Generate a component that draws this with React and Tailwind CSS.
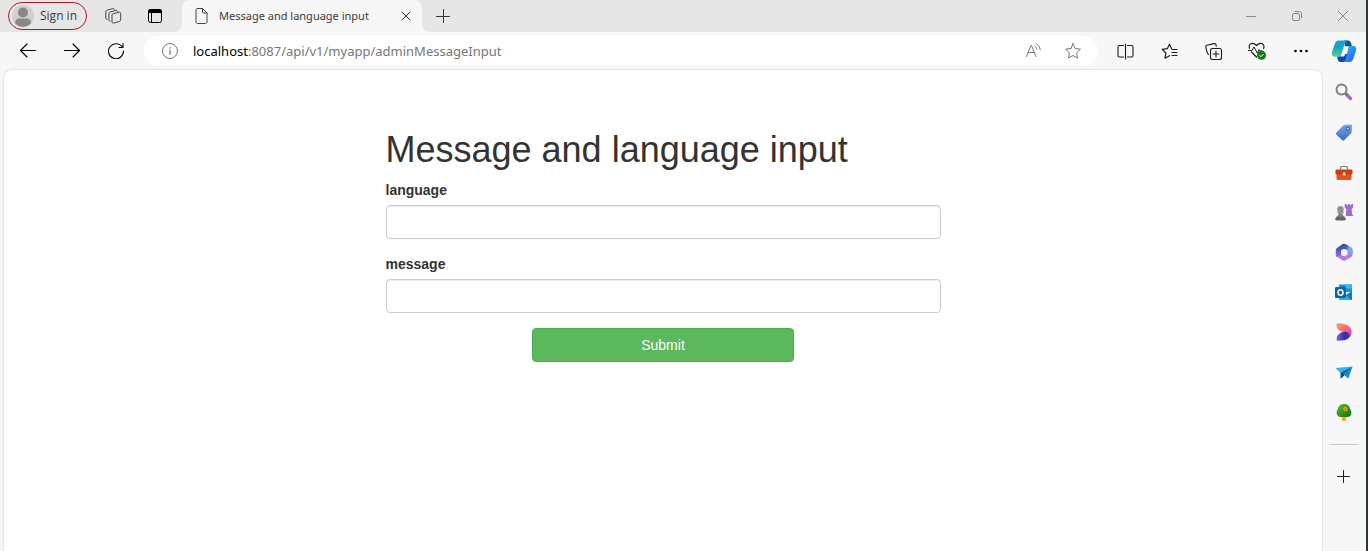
import React from "react";

function Icon({ size = 16, className = "", children }) {
  return (
    <svg
      width={size}
      height={size}
      viewBox={`0 0 ${size} ${size}`}
      fill="none"
      stroke="currentColor"
      strokeLinecap="round"
      strokeLinejoin="round"
      aria-hidden="true"
      className={`shrink-0 ${className}`}
    >
      {children}
    </svg>
  );
}

function IconButton({ label, className = "", children }) {
  return (
    <button type="button" aria-label={label} className={`flex shrink-0 items-center justify-center ${className}`}>
      {children}
    </button>
  );
}

function TitleBar() {
  return (
    <header className="flex h-8 bg-[#f7f7f7] text-[#3b3b3b]">
      <div className="flex w-[182px] shrink-0 items-center rounded-br-lg bg-[#e6e6e6] pl-2">
        <button type="button" className="flex h-7 w-[79px] items-center gap-1.5 rounded-full border border-[#b01c24] pl-[3px] text-xs">
          <svg width="22" height="22" viewBox="0 0 22 22" aria-hidden="true">
            <clipPath id="avatar"><circle cx="11" cy="11" r="11" /></clipPath>
            <circle cx="11" cy="11" r="11" fill="#d2d0ce" />
            <g clipPath="url(#avatar)" fill="#8a8886">
              <circle cx="11" cy="7.500" r="5" />
              <path d="M3 18c0-3 2-4.500 4-4.500h8c2 0 4 1.500 4 4.500-2 3-5 4-8 4s-6-1-8-4z" />
            </g>
          </svg>
          Sign in
        </button>
        <IconButton label="Workspaces" className="ml-1.5 w-10 text-[#444]">
          <Icon size={18}>
            <path d="M8 8.300c0-.8.400-1.300 1.100-1.500l5.900-1.600c1-.2 1.700.3 1.700 1.300v6.300c0 .8-.4 1.400-1.200 1.600l-5.800 1.700c-1 .2-1.700-.3-1.700-1.300z" />
            <path d="M6.300 14.200c-.9-.2-1.400-.7-1.400-1.500V6.500c0-.8.400-1.300 1.100-1.500l5.900-1.600c.8-.2 1.400.1 1.600.8" />
            <path d="M3.200 12.500c-.9-.2-1.400-.7-1.400-1.500V4.700c0-.8.400-1.300 1.100-1.500l5.900-1.600c.8-.2 1.400.1 1.600.8" />
          </Icon>
        </IconButton>
        <IconButton label="Tab actions" className="ml-0.5 w-10 text-black">
          <Icon size={16}>
            <rect x="1.500" y="1.500" width="13" height="13" rx="2" />
            <path d="M1 3.500C1 2 2 1 3.500 1h9C14 1 15 2 15 3.500V5H1z" fill="currentColor" stroke="none" />
            <path d="M4.500 5v9" />
          </Icon>
        </IconButton>
      </div>
      <div className="flex w-60 shrink-0 bg-[#e6e6e6]">
        <div className="flex flex-1 items-center rounded-t-lg bg-[#f7f7f7] pr-2 pl-3">
          <Icon size={16} className="text-[#444]">
            <path d="M3.500.5h5l4.500 4.500v9c0 .8-.7 1.500-1.500 1.500h-8C2.700 15.500 2 14.800 2 14V2C2 1.200 2.700.5 3.500.5zM8.500.5V4c0 .6.400 1 1 1H13" />
          </Icon>
          <span className="ml-[9px] flex-1 font-['Noto_Sans',sans-serif] text-[11px] whitespace-nowrap">Message and language input</span>
          <IconButton label="Close tab" className="w-4 text-[#333]">
            <Icon size={10}><path d="M1 1l8 8M9 1L1 9" /></Icon>
          </IconButton>
        </div>
      </div>
      <div className="flex flex-1 justify-between rounded-bl-lg bg-[#e6e6e6]">
        <IconButton label="New tab" className="w-[42px] text-[#333]">
          <Icon size={14}><path d="M7.500 .5v13M.5 7.500h13" /></Icon>
        </IconButton>
        <div className="flex text-[#888]">
          <IconButton label="Minimize" className="w-[46px]">
            <Icon size={10}><path d="M.5 5.500h9" /></Icon>
          </IconButton>
          <IconButton label="Restore" className="w-[46px]">
            <Icon size={10}>
              <rect x=".5" y="2.500" width="7" height="7" rx="1.500" />
              <path d="M3 .5h4.500c1 0 2 1 2 2V7" />
            </Icon>
          </IconButton>
          <IconButton label="Close" className="w-[46px]">
            <Icon size={10}><path d="M.5 .5l9 9M9.500 .5l-9 9" /></Icon>
          </IconButton>
        </div>
      </div>
    </header>
  );
}

function Toolbar() {
  return (
    <div className="flex h-[38px] items-center pl-1.5 text-[#1b1b1b]">
      <IconButton label="Back" className="w-11">
        <Icon size={16} className="text-black"><path d="M.5 7.500h15M7 1L.5 7.500 7 14" strokeWidth="1.100" /></Icon>
      </IconButton>
      <IconButton label="Forward" className="w-11">
        <Icon size={16} className="text-black"><path d="M.5 7.500h15M9 1l6.500 6.500L9 14" strokeWidth="1.100" /></Icon>
      </IconButton>
      <IconButton label="Refresh" className="w-11">
        <Icon size={16} className="text-black"><path d="M14.500 4.500A7.500 7.500 0 1 0 15.500 8M15 .5v4h-4" strokeWidth="1.100" /></Icon>
      </IconButton>
      <div className="ml-1.5 flex h-[30px] min-w-0 flex-1 items-center rounded-full bg-white pr-[5px] pl-[18px] text-[#777]">
        <Icon size={16}>
          <circle cx="8" cy="8" r="7.500" />
          <path d="M8 7.200v4.300M8 4.500v.6" strokeWidth="1.200" />
        </Icon>
        <div className="relative ml-[15px] min-w-0 flex-1 font-['Noto_Sans',sans-serif] text-[13px] leading-5">
          <div aria-hidden="true" className="truncate">
            <span className="text-black">localhost</span>:8087/api/v1/myapp/adminMessageInput
          </div>
          <input
            aria-label="Address"
            defaultValue="localhost:8087/api/v1/myapp/adminMessageInput"
            className="absolute inset-0 w-full bg-transparent text-transparent outline-none"
          />
        </div>
        <IconButton label="Read aloud" className="w-10">
          <Icon size={16}>
            <path d="M1.500 13.500L6 2.500h.5L11 13.500M3.200 9.500h6.200M10 3.200c1 .7 1.600 1.700 1.600 3M11.500 .8c2 1.200 3.500 3.400 3.700 6" />
          </Icon>
        </IconButton>
        <IconButton label="Add to favorites" className="w-10">
          <Icon size={16}><path d="M8 .8l2.200 4.700 5.200.7-3.800 3.600.9 5.200L8 12.500 3.500 15l.9-5.200L.6 6.200l5.200-.7z" /></Icon>
        </IconButton>
      </div>
      <div className="mr-px ml-[5px] flex">
        <IconButton label="Split screen" className="w-11">
          <Icon size={17}><path d="M6.500 2.500h-4c-1.100 0-1.500.7-1.500 1.500v8.500c0 1 .5 1.500 1.500 1.500h4M10.500 2.500h4c1.100 0 1.500.7 1.500 1.500v8.500c0 1-.5 1.500-1.500 1.500h-4M8.500 1v15" strokeWidth="1.100" /></Icon>
        </IconButton>
        <IconButton label="Favorites" className="w-11">
          <Icon size={17}><path d="M10.500 5.500L8.500 1.200 6.300 5.700l-5.100.7L4.900 10 4 15.200l4.500-2.500M11 6.500h5M11 9.500h5M11 12.500h5" strokeWidth="1.200" /></Icon>
        </IconButton>
        <IconButton label="Collections" className="w-11">
          <Icon size={17}>
            <path d="M3.600 11.500C2.600 11 2.400 10.500 2.200 9.700L.8 4.200C.6 3.300 1 2.500 2 2.200L9 .6c1-.2 1.800.3 2 1.300l.3 1.300" strokeWidth="1.100" />
            <rect x="5.500" y="5.500" width="11" height="11" rx="2" strokeWidth="1.100" />
            <path d="M11 8v6M8 11h6" strokeWidth="1.100" />
          </Icon>
        </IconButton>
        <IconButton label="Browser essentials" className="w-11">
          <Icon size={18}>
            <path d="M1.400 6.300C.5 3.500 2 1.300 4.300 1.300c1.700 0 3 .9 4.200 2.200 1.200-1.300 2.500-2.200 4.200-2.200 2.600 0 4.100 2.600 2.900 5.200M3.500 10l5 5" strokeWidth="1.200" />
            <path d="M.5 8.500h3.500l2-3.500 3.200 6 2-3.500.9 1.500h2" />
            <circle cx="13.500" cy="13.300" r="4.500" fill="#107c10" stroke="none" />
            <path d="M11.700 13.500l1.300 1.200 2.300-2.400" stroke="#fff" />
          </Icon>
        </IconButton>
        <IconButton label="Settings and more" className="w-11">
          <Icon size={16} className="text-black">
            <g fill="currentColor" stroke="none"><circle cx="2.500" cy="8" r="1.300" /><circle cx="8" cy="8" r="1.300" /><circle cx="13.500" cy="8" r="1.300" /></g>
          </Icon>
        </IconButton>
      </div>
    </div>
  );
}

function Art({ size = 18, children }) {
  return (
    <svg width={size} height={size} viewBox="0 0 18 18" aria-hidden="true">
      {children}
    </svg>
  );
}

const sideApps = [
  {
    name: "Copilot",
    art: (
      <svg width="26" height="24" viewBox="0 0 26 24" aria-hidden="true">
        <defs>
          <linearGradient id="cpA" x1="0" y1="0" x2="0" y2="1"><stop stopColor="#1a9be0" /><stop offset=".45" stopColor="#12a9c4" /><stop offset="1" stopColor="#5fd08a" /></linearGradient>
          <linearGradient id="cpB" x1="0" y1="0" x2="1" y2="1"><stop stopColor="#38bdf2" /><stop offset=".6" stopColor="#2483f5" /><stop offset="1" stopColor="#1458e8" /></linearGradient>
        </defs>
        <path d="M13 .5h4c1.800 0 2.500 1 3 2.500l1 3.500h-7z" fill="#0b5d87" />
        <path d="M8 .5h8.500c-2 .8-2.600 2.500-3.200 4.500L10.500 14c-.6 2-1.500 2.700-3.500 2.700H4c-2.800 0-3.800-2-3-4.800L3.700 4C4.500 1.500 5.800.5 8 .5z" fill="url(#cpA)" />
        <path d="M7 16.700c2 0 2.800-.8 3.400-2.700h7l-1.200 4.800c-.5 2-1.600 3.200-3.600 3.200H9.500c-1.500 0-2.200-.8-2.700-2.500L6 16.700z" fill="#1443c8" />
        <path d="M18 6h4c2.800 0 3.700 2 3 4.500l-2.700 8c-.8 2.500-2 3.500-4.300 3.500h-6c2-.5 2.500-2 3-4L17 9.500C17.500 7.500 18 6 18 6z" fill="url(#cpB)" />
        <path d="M14.500 6.500H17c-.8.500-1.200 1.500-1.600 3L14 14.500c-.5 1.600-1 2-2.500 2H9c.8-.5 1.100-1.200 1.500-2.500l2-6c.3-1 .9-1.500 2-1.500z" fill="#fff" />
      </svg>
    ),
  },
  {
    name: "Search",
    art: (
      <Art>
        <path d="M11.500 11.500l4 4" stroke="#a06bd0" strokeWidth="3.300" strokeLinecap="round" />
        <path d="M10 10l2 2" stroke="#666" strokeWidth="1.800" />
        <circle cx="6.500" cy="6.500" r="5" fill="#fff" fillOpacity=".5" stroke="#7b7d80" strokeWidth="1.900" />
      </Art>
    ),
  },
  {
    name: "Shopping",
    art: (
      <Art>
        <defs><linearGradient id="tag" x1="0" y1="0" x2="0" y2="1"><stop stopColor="#6fa6ee" /><stop offset="1" stopColor="#3f68c8" /></linearGradient></defs>
        <path d="M9.500 2L15.500 1.500c.9 0 1.500.7 1.500 1.500l-.4 6c0 .6-.3 1-.7 1.500L9.400 17c-.7.700-1.600.700-2.300 0L1.500 11.700c-.7-.7-.7-1.600 0-2.300L8 2.700c.5-.4.9-.6 1.500-.7z" fill="url(#tag)" />
        <circle cx="12.700" cy="5.700" r="1.500" fill="#dce8f8" stroke="#27468a" />
      </Art>
    ),
  },
  {
    name: "Tools",
    art: (
      <Art>
        <path d="M5.500 6.500V4.800c0-.8.500-1.300 1.300-1.300h4.400c.8 0 1.300.5 1.300 1.300v1.700" fill="none" stroke="#777" strokeWidth="1.200" />
        <path d="M1.500 10h15v5.500c0 .8-.6 1.500-1.500 1.500H3c-.9 0-1.500-.7-1.500-1.500z" fill="#df5420" />
        <rect x=".5" y="6.500" width="17" height="5" rx="1.300" fill="#c8400f" />
        <rect x="7.700" y="9.500" width="2.800" height="3" rx=".7" fill="#ddd" />
      </Art>
    ),
  },
  {
    name: "Games",
    art: (
      <Art>
        <path d="M9.800 1h1.900v1.300h1.400V1h1.800v1.300h1.400V1H18v4l-1.300 1 .4 5.500h.9V13h-7.200L11.300 6 9.800 5z" fill="#a26bd0" />
        <circle cx="5.500" cy="6.300" r="3.200" fill="#8f8f8f" />
        <path d="M4 8.500h3c0 2 .7 3.500 1.800 5H2.200C3.300 12 4 10.500 4 8.500z" fill="#7e7e7e" />
        <rect x="2" y="8.700" width="7" height="1.500" rx=".7" fill="#9a9a9a" />
        <path d="M1.800 13.300h7.400l1.500 2.500c.3 1-.1 1.700-1 1.700H1.300c-.9 0-1.300-.7-1-1.700z" fill="#666" />
      </Art>
    ),
  },
  {
    name: "Microsoft 365",
    art: (
      <Art>
        <defs>
          <linearGradient id="msA" x1="0" y1="0" x2="1" y2="1"><stop stopColor="#3e3f9e" /><stop offset="1" stopColor="#4a9be0" /></linearGradient>
          <linearGradient id="msB" x1="0" y1="0" x2="1" y2="1"><stop stopColor="#8f6be0" /><stop offset="1" stopColor="#c77adf" /></linearGradient>
          <linearGradient id="msC" x1="0" y1="0" x2="0" y2="1"><stop stopColor="#2f3f9c" /><stop offset="1" stopColor="#8a78e8" /></linearGradient>
        </defs>
        <path d="M8 1L3 4.200C1.500 5.200.8 6 .8 7.500V12c0 2 1.700 2.800 3.200 1.800l2.300-1.500V7.500L12 4z" fill="url(#msC)" />
        <path d="M7.300 1.300c1.200-.8 2.400-.7 3.500 0l5 3c1.100.7 1.700 1.600 1.700 2.800V11l-5-3.300L6.200 7V3.500c0-1 .4-1.700 1.100-2.200z" fill="url(#msA)" />
        <path d="M1.500 13.500c.8.800 1.700.9 2.500.4L6.500 12l3 1.500 3.500-3V7.500L11 17c-1.500.8-2.700.7-3.800 0z" fill="url(#msB)" />
        <path d="M12.500 7.700l5 3.300c0 1.500-.4 2.500-1.500 3.200l-5 2.900c-1.200.6-2.500.4-3.500-.1l4-3c.7-.5 1-1.200 1-2z" fill="#b67be2" />
        <path d="M12.500 7.700l5 3.300V7c0-1.200-.6-2.100-1.700-2.800L13 2.600z" fill="#6faeea" />
        <circle cx="9.300" cy="9.300" r="3.200" fill="#f7f7f7" />
      </Art>
    ),
  },
  {
    name: "Outlook",
    art: (
      <Art>
        <path d="M5 1.500h11c.6 0 1 .4 1 1V9H4V2.500c0-.6.400-1 1-1z" fill="#1690d8" />
        <path d="M10.500 1.500H17v4h-6.500z" fill="#35b8f1" />
        <path d="M4 8l7 4 6-4v8c0 .6-.4 1-1 1H5c-.6 0-1-.4-1-1z" fill="#2bb3ed" />
        <path d="M17 8.500V16c0 .6-.4 1-1 1l-5-5z" fill="#1278c6" />
        <rect x="0" y="4" width="11" height="11" rx="1.200" fill="#0b63b0" />
        <ellipse cx="5.500" cy="9.500" rx="2.500" ry="2.800" fill="none" stroke="#fff" strokeWidth="1.500" />
      </Art>
    ),
  },
  {
    name: "Designer",
    art: (
      <Art>
        <defs>
          <linearGradient id="dsA" x1="0" y1="0" x2="1" y2="1"><stop stopColor="#ffa451" /><stop offset=".5" stopColor="#f5677d" /><stop offset="1" stopColor="#d33fe0" /></linearGradient>
          <linearGradient id="dsB" x1="0" y1="0" x2="1" y2="0"><stop stopColor="#6d6cf0" /><stop offset=".6" stopColor="#3d2c9a" /><stop offset="1" stopColor="#6a2fc0" /></linearGradient>
        </defs>
        <path d="M1.500 2C1.500.9 2.200.3 3.500.3c5.500 0 9.500 1.500 11.800 4.500 2 2.700 1.800 6.300-.2 9L9 9C4.500 8.500 1.500 6 1.500 2z" fill="url(#dsA)" />
        <path d="M1.500 16.200c0 1 .7 1.500 1.900 1.500 5 0 9.200-.7 11.600-3.900.3-3.300-2-5.100-5-5.100-4.500 0-8.500 3.300-8.500 7.500z" fill="url(#dsB)" />
      </Art>
    ),
  },
  {
    name: "Drop",
    art: (
      <Art>
        <path d="M.5 5L17.500 3.500 6.500 11z" fill="#35b2ec" />
        <path d="M17.500 3.500L5.500 10v5.500L9 12z" fill="#0b5295" />
        <path d="M17.500 3.500L8 11l5.300 4.500z" fill="#1689d1" />
        <path d="M5.500 15.500L7.500 11l2 1.500z" fill="#0c3d75" />
      </Art>
    ),
  },
  {
    name: "Tree",
    art: (
      <Art>
        <defs><linearGradient id="tree" x1="0" y1="0" x2="1" y2="1"><stop stopColor="#65bd22" /><stop offset="1" stopColor="#0b6f23" /></linearGradient></defs>
        <path d="M7 13h4v4c0 .6-.4 1-1 1H8c-.6 0-1-.4-1-1z" fill="#f8ab15" />
        <path d="M9 1c3.700 0 5.800 2.300 6 4.800 1 1.200 1.400 2.500 1.400 4 0 2.700-1.700 4.200-4.200 4.200H5.800c-2.500 0-4.200-1.500-4.200-4.200 0-1.500.4-2.800 1.400-4C3.200 3.300 5.300 1 9 1z" fill="url(#tree)" />
        <circle cx="10.500" cy="6" r="2.200" fill="#e8a51a" /><circle cx="10.500" cy="6" r="1.100" fill="#e46c12" />
      </Art>
    ),
  },
];

function Sidebar() {
  return (
    <aside className="flex w-[42px] shrink-0 flex-col items-stretch pr-0.5 text-[#222]">
      {sideApps.map((app) => (
        <IconButton key={app.name} label={app.name} className="h-10">
          {app.art}
        </IconButton>
      ))}
      <div className="mx-1.5 mt-3 border-t border-[#c8c8c8]" />
      <IconButton label="Customize sidebar" className="mt-3 h-10">
        <Icon size={14}><path d="M6.500 .5v12M.5 6.500h12" /></Icon>
      </IconButton>
    </aside>
  );
}

function Field({ id, label }) {
  return (
    <div className="mb-[15px]">
      <label htmlFor={id} className="mb-[5px] block font-bold">{label}</label>
      <input
        id={id}
        name={id}
        type="text"
        className="block h-[34px] w-full rounded border border-[#ccc] bg-white px-3 py-1.5 text-[#555] shadow-[inset_0_1px_1px_rgba(0,0,0,0.075)] focus:border-[#66afe9] focus:outline-none"
      />
    </div>
  );
}

function MessageForm() {
  return (
    <form
      onSubmit={(e) => e.preventDefault()}
      className="mx-auto w-full max-w-[555px] pt-[60px] font-['Liberation_Sans',Arial,sans-serif] text-sm text-[#333]"
    >
      <h1 className="mb-2.5 text-4xl leading-10 font-normal">Message and language input</h1>
      <Field id="language" label="language" />
      <Field id="message" label="message" />
      <div className="flex justify-center">
        <button type="submit" className="h-[34px] w-[262px] rounded border border-[#4cae4c] bg-[#5cb85c] text-white">
          Submit
        </button>
      </div>
    </form>
  );
}

export default function App() {
  return (
    <div className="flex min-h-screen flex-col border-r-2 border-[#30363b] bg-[#f7f7f7] font-['Open_Sans','Noto_Sans',sans-serif]">
      <TitleBar />
      <div className="flex flex-1">
        <div className="flex min-w-0 flex-1 flex-col">
          <Toolbar />
          <main className="mr-0.5 ml-1 flex-1 rounded-t-lg bg-white shadow-[0_0_2px_rgba(0,0,0,0.25)]">
            <MessageForm />
          </main>
        </div>
        <Sidebar />
      </div>
    </div>
  );
}
